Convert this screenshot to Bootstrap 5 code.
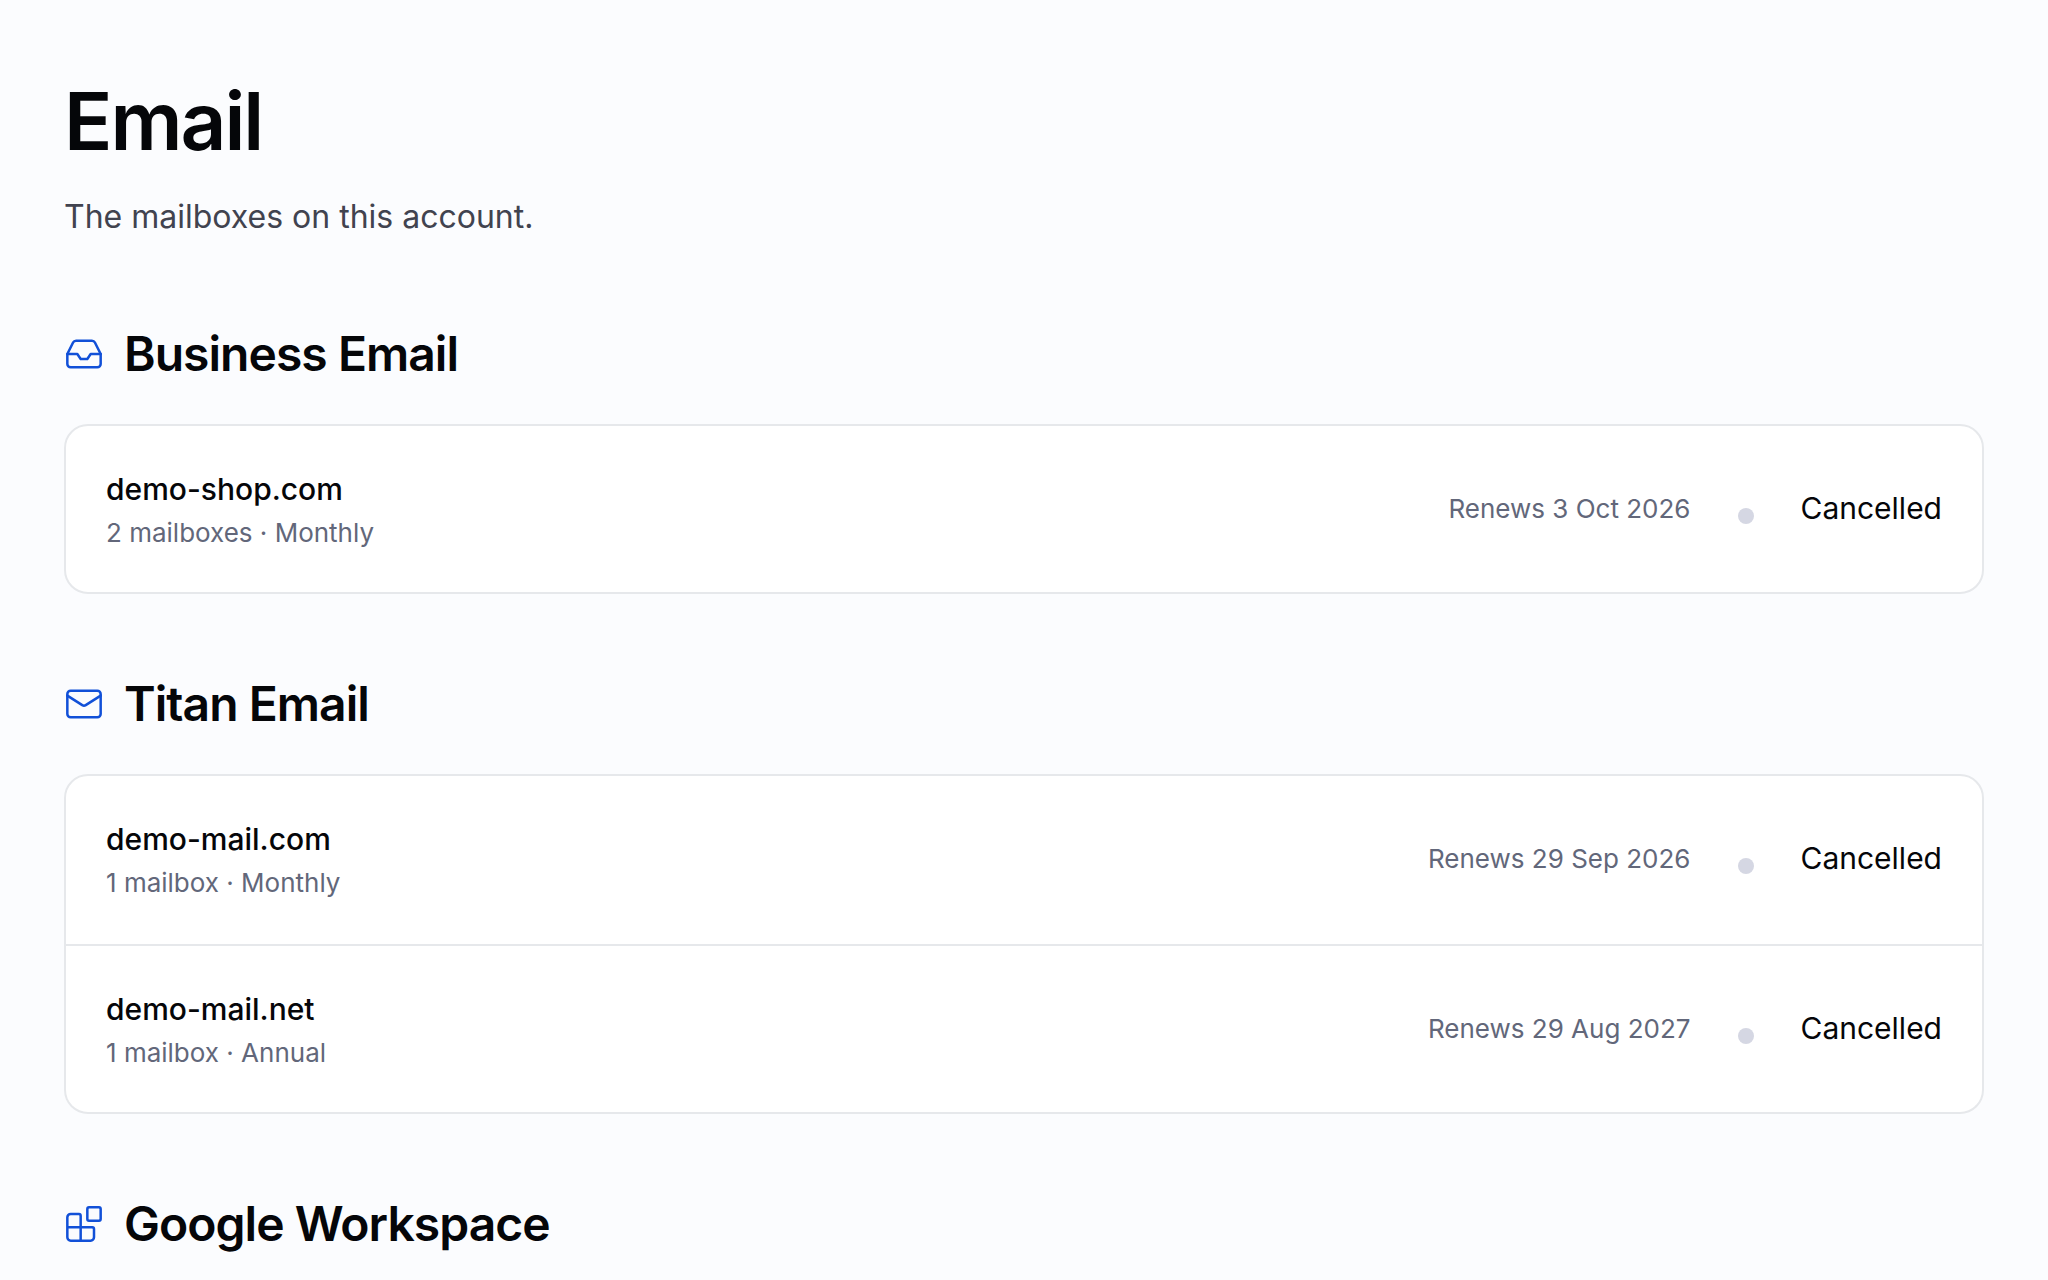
<!DOCTYPE html>
<html lang="en">
<head>
<meta charset="utf-8">
<meta name="viewport" content="width=device-width, initial-scale=1">
<title>Email</title>
<link href="https://cdn.jsdelivr.net/npm/bootstrap@5.3.0/dist/css/bootstrap.min.css" rel="stylesheet">
<style>
body{background:#fbfcfe;color:#050609;font-family:Inter,"Liberation Sans",sans-serif}
.page{padding:72px 64px 0}
.page-title{font-size:80px;line-height:98px;font-weight:600;letter-spacing:-.025em}
.intro{font-size:32px;line-height:54px;color:#41434f;margin-top:20px}
.plan{margin-top:78px}
.plan-head{gap:20px;margin-bottom:38px}
.plan-head svg{width:40px;height:40px;color:#1150d8;flex:none}
.plan-title{font-size:48px;line-height:64px;font-weight:600;letter-spacing:-.02em}
.plan-list{--bs-list-group-border-color:#e6e8eb;--bs-list-group-border-radius:24px;--bs-list-group-border-width:2px;--bs-list-group-color:#050609}
.plan-list .list-group-item{padding:38px 40px}
.plan-list .list-group-item:not(:last-child){padding-bottom:40px}
.mailbox{padding-top:2px}
.domain{font-size:30px;line-height:46px;font-weight:500}
.detail{font-size:26px;line-height:42px;color:#62677a}
.dot{width:16px;height:16px;background:#d5d7e3;margin:14px 46px 0 48px}
.state{font-size:30px;line-height:42px;padding-bottom:2px}
</style>
</head>
<body>
<main class="page container-fluid">
<header>
<h1 class="page-title mb-0">Email</h1>
<p class="intro mb-0">The mailboxes on this account.</p>
</header>
<section class="plan">
<div class="plan-head d-flex align-items-center">
<svg viewBox="0 0 24 24" fill="none" stroke="currentColor" stroke-width="1.5" stroke-linecap="round" stroke-linejoin="round" aria-hidden="true"><path d="M22 12h-6l-2 3h-4l-2-3H2"/><path d="M5.45 5.11 2 12v6a2 2 0 0 0 2 2h16a2 2 0 0 0 2-2v-6l-3.45-6.89A2 2 0 0 0 16.76 4H7.24a2 2 0 0 0-1.79 1.11z"/></svg>
<h2 class="plan-title mb-0">Business Email</h2>
</div>
<ul class="plan-list list-group">
<li class="list-group-item d-flex align-items-center justify-content-between">
<div class="mailbox"><div class="domain">demo-shop.com</div><div class="detail">2 mailboxes · Monthly</div></div>
<div class="d-flex align-items-center"><span class="detail">Renews 3 Oct 2026</span><span class="dot rounded-circle"></span><span class="state">Cancelled</span></div>
</li>
</ul>
</section>
<section class="plan">
<div class="plan-head d-flex align-items-center">
<svg viewBox="0 0 24 24" fill="none" stroke="currentColor" stroke-width="1.5" stroke-linecap="round" stroke-linejoin="round" aria-hidden="true"><rect x="2" y="4" width="20" height="16" rx="2"/><path d="m22 7-8.97 5.7a1.94 1.94 0 0 1-2.06 0L2 7"/></svg>
<h2 class="plan-title mb-0">Titan Email</h2>
</div>
<ul class="plan-list list-group">
<li class="list-group-item d-flex align-items-center justify-content-between">
<div class="mailbox"><div class="domain">demo-mail.com</div><div class="detail">1 mailbox · Monthly</div></div>
<div class="d-flex align-items-center"><span class="detail">Renews 29 Sep 2026</span><span class="dot rounded-circle"></span><span class="state">Cancelled</span></div>
</li>
<li class="list-group-item d-flex align-items-center justify-content-between">
<div class="mailbox"><div class="domain">demo-mail.net</div><div class="detail">1 mailbox · Annual</div></div>
<div class="d-flex align-items-center"><span class="detail">Renews 29 Aug 2027</span><span class="dot rounded-circle"></span><span class="state">Cancelled</span></div>
</li>
</ul>
</section>
<section class="plan">
<div class="plan-head d-flex align-items-center">
<svg viewBox="0 0 24 24" fill="none" stroke="currentColor" stroke-width="1.5" stroke-linecap="round" stroke-linejoin="round" aria-hidden="true"><path d="M10 22V7a1 1 0 0 0-1-1H4a2 2 0 0 0-2 2v12a2 2 0 0 0 2 2h12a2 2 0 0 0 2-2v-5a1 1 0 0 0-1-1H2"/><rect x="14" y="2" width="8" height="8" rx="1"/></svg>
<h2 class="plan-title mb-0">Google Workspace</h2>
</div>
</section>
</main>
<script src="https://cdn.jsdelivr.net/npm/bootstrap@5.3.0/dist/js/bootstrap.bundle.min.js"></script>
</body>
</html>
